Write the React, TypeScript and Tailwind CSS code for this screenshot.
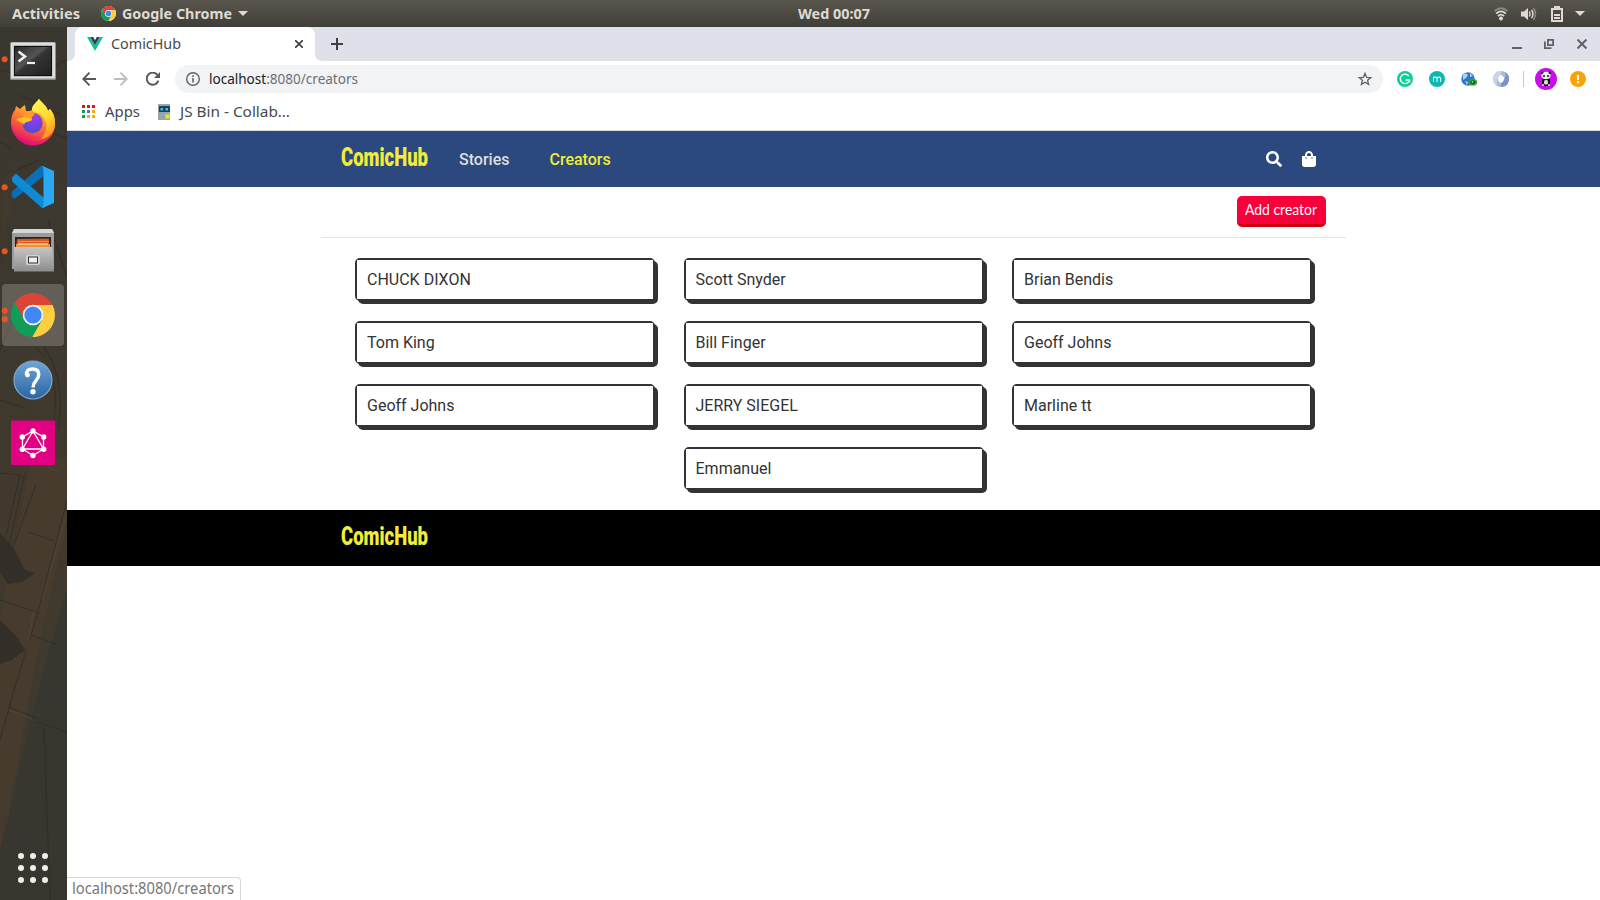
import { useLayoutEffect, useRef, useState } from "react";
import type { ReactNode } from "react";

const UI = "font-['Noto_Sans',sans-serif]";

/* One line of text condensed or expanded to a given width. */
function Fit({ w, className = "", children }: { w: number; className?: string; children: ReactNode }) {
  const ref = useRef<HTMLSpanElement>(null);
  const [scale, setScale] = useState(1);
  useLayoutEffect(() => {
    if (ref.current && ref.current.offsetWidth) {
      const previous = ref.current.style.transform;
      ref.current.style.transform = "none";
      const natural = ref.current.getBoundingClientRect().width;
      ref.current.style.transform = previous;
      setScale(w / natural);
    }
  }, [w]);
  return (
    <span className={`block shrink-0 ${className}`} style={{ width: w }}>
      <span ref={ref} className="inline-block origin-left whitespace-nowrap" style={{ transform: `scaleX(${scale})` }}>
        {children}
      </span>
    </span>
  );
}

function ChromeLogo({ className }: { className: string }) {
  return (
    <svg className={className} viewBox="-22 -22 44 44">
      <circle r="22" fill="#fff" />
      <path d="M-19.05-11A22 22 0 0 1 19.6-10H0L-8.700 5Z" fill="#db4437" />
      <path d="M19.6-10A22 22 0 0 1-1 22L8.700 5 0-10Z" fill="#ffcd40" />
      <path d="M-18.4-12A22 22 0 0 0-.5 22L8 5.500 0 10-8.700 5Z" fill="#0f9d58" />
      <circle r="10" fill="#f1f1f1" />
      <circle r="8" fill="#4285f4" />
    </svg>
  );
}

function TopBar() {
  return (
    <header className={`grid h-[27px] grid-cols-[1fr_72px_1fr] items-center bg-linear-to-b from-[#5a574e] to-[#3f3e38] text-[15px] leading-5 font-bold text-[#dfdbd2] ${UI}`}>
      <div className="flex items-center pl-3">
        <Fit w={68} className="pb-[2px]">Activities</Fit>
        <ChromeLogo className="ml-[21px] size-[15px]" />
        <Fit w={110} className="ml-[6px] pb-[2px]">Google Chrome</Fit>
        <svg className="ml-[6px] h-[5px] w-[10px]" viewBox="0 0 10 5"><path d="M0 0h10L5 5z" fill="#dfdbd2" /></svg>
      </div>
      <div className="flex translate-x-[34px] justify-center">
        <Fit w={72} className="pb-[2px]">Wed 00:07</Fit>
      </div>
      <div className="flex items-center justify-end pr-[15px]">
        <svg className="h-[14px] w-[14px]" viewBox="0 0 14 14" fill="none" strokeWidth="1.8">
          <path d="M.5 4.2Q7-1.8 13.5 4.2" stroke="#8b8880" />
          <path d="M2.2 6.6Q7 2.2 11.8 6.6M4 9Q7 6.2 10 9" stroke="#dfdbd2" />
          <circle cx="7" cy="11.6" r="2" fill="#dfdbd2" />
        </svg>
        <svg className="ml-[13px] h-[14px] w-[16px]" viewBox="0 0 16 14" fill="none" strokeWidth="1.5">
          <path d="M0 4.5h3L7 1v12L3 9.5H0z" fill="#dfdbd2" />
          <path d="M8.4 4.5q1.4 2.5 0 5M10.6 2.8q2.6 4.2 0 8.4" stroke="#dfdbd2" />
          <path d="M12.5 1q4 6 0 12" stroke="#8b8880" />
        </svg>
        <svg className="ml-[14px] h-[16px] w-[12px]" viewBox="0 0 12 16">
          <path d="M3 0h6v2h3v14H0V2h3zM2 4v10h8V4zM3 8h6v2H3zM3 11h6v2H3z" fill="#dfdbd2" fillRule="evenodd" />
        </svg>
        <svg className="ml-[12px] h-[5px] w-[10px]" viewBox="0 0 10 5"><path d="M0 0h10L5 5z" fill="#dfdbd2" /></svg>
      </div>
    </header>
  );
}

function Slot({ dots = 0, active = false, children }: { dots?: number; active?: boolean; children: ReactNode }) {
  return (
    <svg className="block h-16 w-[67px] shrink-0" viewBox="0 0 67 64">
      {active && <rect x="2" y="1" width="62" height="62" rx="4" fill="#fff" fillOpacity=".2" />}
      {dots === 1 && <circle cx="4.7" cy="32.2" r="3" fill="#e95420" />}
      {dots === 2 && (
        <g fill="#e95420">
          <circle cx="4.7" cy="27.7" r="3" />
          <circle cx="4.7" cy="36.3" r="3" />
        </g>
      )}
      {children}
    </svg>
  );
}

function DockTexture() {
  return (
    <svg className="absolute inset-0 h-full w-full" viewBox="0 27 67 873" preserveAspectRatio="none">
      <defs>
        <linearGradient id="dock" x1="0" y1="0" x2="0" y2="1">
          <stop offset="0" stopColor="#3a3730" />
          <stop offset=".4" stopColor="#3e382e" />
          <stop offset=".6" stopColor="#42392d" />
          <stop offset=".85" stopColor="#3d3930" />
          <stop offset="1" stopColor="#35342e" />
        </linearGradient>
      </defs>
      <rect y="27" width="67" height="873" fill="url(#dock)" />
      <path d="M30 465 67 455V520L36 660 8 820 0 850V620z" fill="#483c2d" opacity=".8" />
      <path d="M67 590V900H0V850L8 820 36 700 52 640z" fill="#37362f" />
      <path d="M0 533 14 549 25 570 35 573 22 582 8 584 0 572zM0 620 16 636 25 650 12 660 0 664z" fill="#2f2c27" opacity=".8" />
      <path d="M0 473 20 475 6 535M25 473 9 545M36 484 14 545M67 500 38 612 14 690 0 740M28 532 54 541M0 600 40 613M29 634 57 645M8 707 36 718M36 722 67 732M44 728 50 900" fill="none" stroke="#2f2b24" strokeWidth="1.2" opacity=".6" />
      <path d="M47 466 60 473M67 512 42 600M34 610 27 650M9 710 32 719" fill="none" stroke="#5a4b37" strokeWidth="1" opacity=".6" />
      <path d="M0 142 14 150M22 123 67 138M12 172 40 160M0 182V260M48 220 66 275M0 350 20 300M36 348Q60 370 54 420M44 348Q67 380 58 430M0 400 26 408M66 60Q30 80 0 70M20 95 62 115" fill="none" stroke="#2d2a24" strokeWidth="1.6" opacity=".45" />
      <path d="M0 185 18 160 14 200 0 250zM30 350 50 360 55 415 40 420z" fill="#443a2c" opacity=".5" />
    </svg>
  );
}

function Dock() {
  return (
    <aside className="relative flex w-[67px] shrink-0 flex-col overflow-hidden">
      <DockTexture />
      <div className="relative flex flex-1 flex-col">
        <Slot dots={1}>
          <defs>
            <linearGradient id="term" x1="0" y1="0" x2="1" y2="1">
              <stop offset="0" stopColor="#292929" /><stop offset=".42" stopColor="#555" /><stop offset=".5" stopColor="#343434" /><stop offset="1" stopColor="#202020" />
            </linearGradient>
          </defs>
          <rect x="10" y="15" width="46" height="38" rx="1.5" fill="#8d8d8d" />
          <rect x="11" y="15.5" width="44" height="36" rx="1" fill="#dedede" />
          <rect x="13.5" y="18" width="39" height="32" fill="#b3b3b3" />
          <rect x="14" y="19" width="38" height="30" fill="#111" />
          <rect x="15" y="20" width="36" height="28" fill="url(#term)" />
          <path d="M18.5 24.5 25 29.5 18.5 34.5" fill="none" stroke="#eee" strokeWidth="2.6" />
          <path d="M27 36h8" stroke="#eee" strokeWidth="2.2" />
        </Slot>
        <Slot>
          <defs>
            <linearGradient id="fox" x1=".8" y1="0" x2=".35" y2="1">
              <stop offset="0" stopColor="#fff44f" /><stop offset=".3" stopColor="#ffb42a" /><stop offset=".6" stopColor="#ff6a35" /><stop offset="1" stopColor="#e30a70" />
            </linearGradient>
            <linearGradient id="flame" x1=".3" y1="0" x2=".7" y2="1">
              <stop offset="0" stopColor="#fff44f" /><stop offset=".55" stopColor="#ffd72e" /><stop offset="1" stopColor="#ff8a1c" />
            </linearGradient>
            <radialGradient id="globe" cx=".6" cy=".2" r=".85">
              <stop offset="0" stopColor="#a23be8" /><stop offset=".5" stopColor="#7542e5" /><stop offset="1" stopColor="#4a4fc4" />
            </radialGradient>
          </defs>
          <path d="M39 8C42 12 47 15 48 20L50 18C54 23 55 27 55 33 55 45 45 54 33 54S11 44 11 32C11 26 13 21 15 19L16 15 20 18C22 16 23 15 25 14L26 20C29 20 31 20 32 19 32 14 36 12 39 8Z" fill="url(#fox)" />
          <path d="M39 8C42 12 47 15 48 20L50 18C54 23 55 27 55 34 53 43 48 47 41 48 50 38 47 28 40 23 37 21 34 22 32 19 32 14 36 12 39 8Z" fill="url(#flame)" />
          <circle cx="32.5" cy="32" r="10.2" fill="url(#globe)" />
          <path d="M26 20C30 20 33 21 35 23L32 26C31 28 33 29 31 30 27 31 25 31 24 34 20 31 18 30 16 29 18 26 22 27 24 26 22 24 24 22 26 20Z" fill="#ff9a22" />
          <path d="M24 32C20 31 18 30 17 28 22 26 29 26 32 28 30 31 26 30 24 32Z" fill="#ffc32c" />
          <path d="M13 37C18 54 44 55 53 41 45 61 17 59 13 37Z" fill="#e4147a" opacity=".6" />
        </Slot>
        <Slot dots={1}>
          <path d="M12 42 14.5 43.8 44 21V11H41L12 36.5Q11.5 39 12 42Z" fill="#0a6fb5" />
          <path d="M12 22.5 16 18.5 44 43V53H42L12.5 27Q11.7 25 12 22.5Z" fill="#0f8ad4" />
          <path d="M42.5 11 54 16V48L42.5 53 43.5 50V14Z" fill="#29a9f3" />
        </Slot>
        <Slot dots={1}>
          <defs>
            <linearGradient id="steel" x1="0" y1="0" x2="0" y2="1">
              <stop offset="0" stopColor="#c5c5c5" /><stop offset="1" stopColor="#8d8d8d" />
            </linearGradient>
          </defs>
          <path d="M14 10H52L54 14V50H12V14Z" fill="#9c9c9c" />
          <path d="M14 10H52L54 14H12Z" fill="#d6d6d6" />
          <rect x="15" y="18" width="36" height="11" fill="#252525" />
          <path d="M17 20 49 19.5V29H16Z" fill="#d8521d" />
          <path d="M18 22.5H49" stroke="#f68b30" strokeWidth="1.4" />
          <path d="M16 26.500H50" stroke="#f68b30" strokeWidth="3" />
          <path d="M18 25H48" stroke="#ffe6b8" strokeWidth="1.200" />
          <path d="M14 28H52L54 52.5H14Z" fill="url(#steel)" />
          <rect x="26" y="36" width="14" height="10" rx="2" fill="#d3d3d3" />
          <rect x="28.5" y="38" width="9" height="6" fill="#eee" stroke="#333" />
        </Slot>
        <Slot dots={2} active>
          <path d="M13.9 21A22 22 0 0 1 52.5 22H33L24 37Z" fill="#db4437" />
          <path d="M52.5 22A22 22 0 0 1 32 54L42 37 33 22Z" fill="#ffcd40" />
          <path d="M14.9 19.5A22 22 0 0 0 32.2 54L41.5 37.5 33 42 24.5 37Z" fill="#0f9d58" />
          <circle cx="33" cy="32" r="10.3" fill="#f1f1f1" />
          <circle cx="33" cy="32" r="8.6" fill="#4285f4" />
        </Slot>
        <Slot>
          <defs>
            <linearGradient id="help" x1="0" y1="0" x2="0" y2="1">
              <stop offset="0" stopColor="#6ea6d6" /><stop offset="1" stopColor="#2a64a3" />
            </linearGradient>
          </defs>
          <circle cx="33" cy="33" r="19" fill="url(#help)" stroke="#7fa9cf" strokeWidth="1.2" />
          <path d="M26.500 28Q26 22 32.500 22 38.800 22 38.800 27.500C38.800 33 33 34 33 40.500" fill="none" stroke="#fff" strokeWidth="3.400" />
          <circle cx="27.5" cy="28" r="2.4" fill="#fff" />
          <circle cx="33" cy="44.800" r="2.7" fill="#fff" />
        </Slot>
        <Slot>
          <rect x="11" y="9.5" width="44" height="44.5" rx="1" fill="#e10082" />
          <path d="M33 20 43.5 26V38L33 44.5 22.5 38V26ZM33 20 43.5 38H22.5Z" fill="none" stroke="#fff" strokeWidth="1.3" />
          <g fill="#fff">
            <circle cx="33" cy="20" r="2.7" /><circle cx="43.7" cy="26" r="2.7" /><circle cx="43.7" cy="38.3" r="2.7" />
            <circle cx="33" cy="44.5" r="2.7" /><circle cx="22.3" cy="38.3" r="2.7" /><circle cx="22.3" cy="26" r="2.7" />
          </g>
        </Slot>
        <div className="mt-auto mb-[17px] ml-[18px] grid w-[30px] grid-cols-3 gap-[6px]">
          {Array.from({ length: 9 }, (_, i) => (
            <span key={i} className="size-[6px] rounded-full bg-[#eeeeec]" />
          ))}
        </div>
      </div>
    </aside>
  );
}

function TabStrip() {
  return (
    <div className="flex h-[34px] bg-[#dee1e9]">
      <svg className="h-[34px] w-2" viewBox="0 0 8 34"><path d="M8 26v8H0q8 0 8-8" fill="#fff" /></svg>
      <div className="flex w-60 items-center rounded-t-lg bg-white pl-3">
        <svg className="h-[14px] w-4" viewBox="0 0 16 14">
          <path d="M0 0h3.2L8 8.3 12.8 0H16L8 14z" fill="#12c585" />
          <path d="M3.2 0h3L8 3.2 9.8 0h3L8 8.3z" fill="#34395e" />
        </svg>
        <Fit w={70} className={`ml-2 pb-[2px] text-[15px] leading-5 text-[#45494d] ${UI}`}>ComicHub</Fit>
        <svg className="ml-[114px] size-2" viewBox="0 0 8 8"><path d="m0 0 8 8M8 0 0 8" stroke="#3c4043" strokeWidth="1.7" /></svg>
      </div>
      <svg className="h-[34px] w-2" viewBox="0 0 8 34"><path d="M0 26v8h8q-8 0-8-8" fill="#fff" /></svg>
      <svg className="mt-[11px] ml-2 size-3" viewBox="0 0 12 12"><path d="M6 0v12M0 6h12" stroke="#3c4043" strokeWidth="2" /></svg>
      <div className="ml-auto flex items-center pr-[13px]">
        <svg className="size-[10px]" viewBox="0 0 10 10"><path d="M0 9h10" stroke="#5f6368" strokeWidth="2" /></svg>
        <svg className="ml-[22px] size-[10px]" viewBox="0 0 10 10" fill="none" stroke="#5f6368" strokeWidth="1.8"><path d="M3.9.9h5.2v5.2H3.9zM.9 2.5v6.6h6.6" /></svg>
        <svg className="ml-[23px] size-[10px]" viewBox="0 0 10 10"><path d="m.5.5 9 9M9.5.5l-9 9" stroke="#5f6368" strokeWidth="2" /></svg>
      </div>
    </div>
  );
}

function Toolbar() {
  return (
    <div className="flex h-9 items-center bg-white pl-[15px]">
      <svg className="size-[14px]" viewBox="0 0 14 14" fill="none" stroke="#54585d" strokeWidth="1.9"><path d="M14 7H1.5M7.5.7 1.3 7l6.2 6.3" /></svg>
      <svg className="ml-[18px] size-[14px]" viewBox="0 0 14 14" fill="none" stroke="#bcbec1" strokeWidth="1.9"><path d="M0 7h12.5M6.5.7 12.700 7l-6.200 6.300" /></svg>
      <svg className="ml-[18px] size-[14px]" viewBox="0 0 14 14"><path d="M12.4 8.6A6 6 0 1 1 11.3 2.8" fill="none" stroke="#54585d" strokeWidth="1.9" /><path d="M14 0v6H8z" fill="#54585d" /></svg>
      <div className={`ml-[15px] flex h-7 w-[1208px] items-center rounded-full bg-[#f1f3f4] pr-[11px] pl-[11px] text-[15px] leading-5 ${UI}`}>
        <svg className="size-[14px]" viewBox="0 0 14 14"><circle cx="7" cy="7" r="6.3" fill="none" stroke="#5f6368" strokeWidth="1.4" /><path d="M7 6v4.5M7 3.2v1.7" stroke="#5f6368" strokeWidth="1.6" /></svg>
        <Fit w={149} className="ml-[9px] pb-[2px] text-[#6b6f74]"><span className="text-[#202124]">localhost</span>:8080/creators</Fit>
        <svg className="ml-auto size-[14px]" viewBox="0 0 14 14"><path d="m7 1.4 1.6 3.9 4.2.3-3.2 2.7 1 4.1L7 10.2l-3.6 2.2 1-4.1L1.2 5.6l4.2-.3z" fill="none" stroke="#5f6368" strokeWidth="1.3" /></svg>
      </div>
      <svg className="ml-[14px] size-4" viewBox="0 0 16 16"><circle cx="8" cy="8" r="8" fill="#0fcf98" /><path d="M11.8 5A4.7 4.7 0 1 0 12.6 9H8.5M12.6 8.6v3" fill="none" stroke="#fff" strokeWidth="1.3" /></svg>
      <svg className="ml-4 size-4" viewBox="0 0 16 16"><circle cx="8" cy="8" r="8" fill="#0bb8b4" /><path d="M4.5 11V5.500M4.5 7q1.6-2 3.5 0v4M8 7q2-2 3.6 0v4" fill="none" stroke="#fff" strokeWidth="1.1" /></svg>
      <svg className="ml-4 size-4" viewBox="0 0 16 16">
        <circle cx="7" cy="8" r="6.7" fill="#2f76c9" /><path d="M2 4Q5 1 7 4L5 7 2 9zM9 2l3 3-3 1zM4 10l3 1-1 3z" fill="#a8d3f4" />
        <ellipse cx="11.8" cy="11.3" rx="3.400" ry="2.600" fill="#16355d" stroke="#3fa31a" strokeWidth="1.800" /><circle cx="11.500" cy="11" r="1" fill="#5ec" />
      </svg>
      <svg className="ml-4 size-4" viewBox="0 0 16 16">
        <circle cx="8" cy="8" r="5.500" fill="#fff" stroke="#a9bcdc" strokeWidth="5" />
        <path d="M8 0A8 8 0 0 0 4 15Q2 8 8 4z" fill="#c9d6ea" /><path d="M8 16A8 8 0 0 0 12 1q2 7-4 11z" fill="#7d94c2" /><ellipse cx="8" cy="8" rx="2.4" ry="3.7" fill="#fff" />
      </svg>
      <span className="ml-[14px] h-4 w-px bg-[#c8cacd]" />
      <svg className="ml-[11px] size-[22px]" viewBox="0 0 22 22">
        <circle cx="11" cy="11" r="11" fill="#c80fea" /><path d="M7 11h8v7H7z" fill="#111" /><ellipse cx="11" cy="7.5" rx="4.6" ry="3.8" fill="#eee" />
        <circle cx="9" cy="8" r="1.1" fill="#222" /><circle cx="13" cy="8" r="1.1" fill="#222" /><circle cx="7.2" cy="4.7" r="1.2" fill="#222" /><circle cx="14.8" cy="4.7" r="1.2" fill="#222" />
        <rect x="9" y="12" width="4" height="4.5" rx="1.5" fill="#ddd" /><path d="M7 17h2M13 17h2" stroke="#eee" strokeWidth="1.5" />
      </svg>
      <svg className="ml-[13px] size-4" viewBox="0 0 16 16"><circle cx="8" cy="8" r="8" fill="#f9a30b" /><path d="M8 4v5M8 10.3v2" stroke="#fff" strokeWidth="2" /></svg>
    </div>
  );
}

const APP_COLORS = ["bg-[#e8101f]", "bg-[#e8101f]", "bg-[#e8101f]", "bg-[#0f9d58]", "bg-[#4c6ef5]", "bg-[#f9ab00]", "bg-[#0f9d58]", "bg-[#f9ab00]", "bg-[#f9ab00]"];

function Bookmarks() {
  return (
    <div className={`flex h-[34px] items-center border-b border-[#d5d7d8] bg-white pb-[4px] pl-[15px] text-[15px] leading-5 text-[#45494d] ${UI}`}>
      <div className="grid w-[13px] grid-cols-3 gap-[2px]">
        {APP_COLORS.map((c, i) => <span key={i} className={`size-[3px] ${c}`} />)}
      </div>
      <Fit w={35} className="ml-[10px] pb-[2px]">Apps</Fit>
      <svg className="ml-[18px] h-4 w-3" viewBox="0 0 12 16">
        <path d="M0 0h12v16H0z" fill="#98a5ae" /><path d="M1 2h11v6H1z" fill="#1e4254" />
        <path d="M2.5 4H5v2.5H2.5zM7.5 4H10v2.5H7.5z" fill="#3dbdf2" /><path d="M7.5 10.5h4v4h-4z" fill="#e8ea16" />
      </svg>
      <Fit w={110} className="ml-[10px] pb-[2px]">JS Bin - Collab…</Fit>
    </div>
  );
}

function Logo() {
  return (
    <Fit w={87} className="font-[Roboto,sans-serif] text-[25px] leading-8 font-black text-[#f2ec3a]">ComicHub</Fit>
  );
}

function Navbar() {
  return (
    <nav className="flex h-14 justify-center bg-[#2b497f]">
      <div className="flex w-[1025px] items-center pr-[30px] pl-5 text-base font-medium">
        <div className="pb-[2px]"><Logo /></div>
        <a className="ml-[31px] pt-[2px] text-[#dedede]">Stories</a>
        <a className="ml-[40px] pt-[2px] text-[#f2ec3a]">Creators</a>
        <svg className="ml-auto size-4" viewBox="0 0 512 512" fill="#fff">
          <path d="M505 442.700 405.300 343c-4.500-4.500-10.600-7-17-7H372c27.600-35.300 44-79.700 44-128C416 93.100 322.900 0 208 0S0 93.100 0 208s93.100 208 208 208c48.300 0 92.700-16.400 128-44v16.300c0 6.400 2.500 12.500 7 17l99.700 99.700c9.400 9.400 24.600 9.400 33.900 0l28.300-28.300c9.400-9.400 9.400-24.600.1-34zM208 336c-70.700 0-128-57.200-128-128 0-70.700 57.200-128 128-128 70.700 0 128 57.200 128 128 0 70.700-57.200 128-128 128z" />
        </svg>
        <svg className="ml-5 h-4 w-[14px]" viewBox="0 0 448 512" fill="#fff">
          <path d="M352 160v-32C352 57.420 294.579 0 224 0 153.420 0 96 57.420 96 128v32H0v272c0 44.183 35.817 80 80 80h288c44.183 0 80-35.817 80-80V160h-96zm-192-32c0-35.290 28.710-64 64-64s64 28.710 64 64v32H160v-32zm160 120c-13.255 0-24-10.745-24-24s10.745-24 24-24 24 10.745 24 24-10.745 24-24 24zm-192 0c-13.255 0-24-10.745-24-24s10.745-24 24-24 24 10.745 24 24-10.745 24-24 24z" />
        </svg>
      </div>
    </nav>
  );
}

const CREATORS = ["CHUCK DIXON", "Scott Snyder", "Brian Bendis", "Tom King", "Bill Finger", "Geoff Johns", "Geoff Johns", "JERRY SIEGEL", "Marline tt", "Emmanuel"];

function Creators() {
  return (
    <main className="mx-auto w-[1025px]">
      <div className="flex h-[51px] justify-end border-b border-[#e4e4e4] pt-[9px] pr-5">
        <button className="h-[31px] w-[89px] rounded-[5px] border-b-[3px] border-[#cc0011] bg-[#f7003c] pb-[2px] pl-2 font-[Lato,sans-serif] text-[15px] leading-[26px] font-normal text-white">
          <Fit w={72} className="text-left">Add creator</Fit>
        </button>
      </div>
      <div className="flex flex-wrap justify-center gap-x-[28.5px] gap-y-5 px-[33px] py-5">
        {CREATORS.map((name, i) => (
          <div key={i} className="h-[43px] w-[300px] rounded-[5px] border-2 border-[#333] bg-[#333] shadow-[3px_3px_0_#333]">
            <div className="flex h-full items-center bg-white px-[10px] text-base text-[#333]">{name}</div>
          </div>
        ))}
      </div>
    </main>
  );
}

export default function App() {
  return (
    <div className="flex h-screen w-screen flex-col overflow-hidden bg-white">
      <TopBar />
      <div className="flex min-h-0 flex-1">
        <Dock />
        <div className="relative flex min-w-0 flex-1 flex-col">
          <TabStrip />
          <Toolbar />
          <Bookmarks />
          <div className="flex-1 bg-white font-[Roboto,sans-serif]">
            <Navbar />
            <Creators />
            <footer className="flex h-14 justify-center bg-black">
              <div className="flex w-[1025px] items-center pb-[2px] pl-5"><Logo /></div>
            </footer>
          </div>
          <div className={`absolute bottom-0 left-0 h-[23px] w-[174px] rounded-tr border-t border-r border-[#d5d7d8] bg-white pl-[5px] text-[15.5px] leading-[21px] text-[#777] ${UI}`}>
            <Fit w={162}>localhost:8080/creators</Fit>
          </div>
        </div>
      </div>
    </div>
  );
}
